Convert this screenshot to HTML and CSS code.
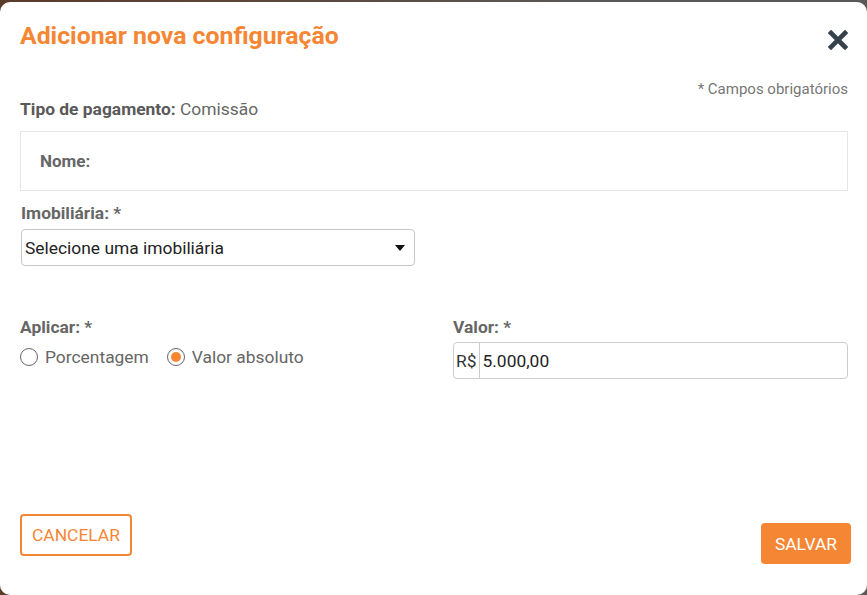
FILE: index.html
```html
<!DOCTYPE html>
<html lang="pt-BR">
<head>
<meta charset="utf-8">
<title>Adicionar nova configuração</title>
<link rel="stylesheet" href="styles.css">
</head>
<body>
<div class="backdrop">
  <div class="modal">
    <div class="modal-header">
      <h2 class="title">Adicionar nova configuração</h2>
      <button class="close" aria-label="Fechar">
        <svg width="20" height="20" viewBox="0 0 20 20"><path d="M3 3 L17 17 M17 3 L3 17" stroke="#37414b" stroke-width="4.6" stroke-linecap="square"/></svg>
      </button>
    </div>
    <div class="required-note">* Campos obrigatórios</div>
    <div class="tipo"><b>Tipo de pagamento:</b> Comissão</div>
    <div class="nome-box"><b>Nome:</b></div>
    <div class="field imob">
      <label class="label">Imobiliária: *</label>
      <div class="select">
        <span>Selecione uma imobiliária</span>
        <svg width="10" height="6" viewBox="0 0 10 6"><path d="M0 0 H10 L5 6 Z" fill="#111"/></svg>
      </div>
    </div>
    <div class="row">
      <div class="col">
        <label class="label">Aplicar: *</label>
        <div class="radios">
          <span class="radio"><span class="circle"></span>Porcentagem</span>
          <span class="radio"><span class="circle checked"></span>Valor absoluto</span>
        </div>
      </div>
      <div class="col">
        <label class="label">Valor: *</label>
        <div class="input-group">
          <span class="addon">R$</span>
          <span class="input">5.000,00</span>
        </div>
      </div>
    </div>
    <div class="footer">
      <button class="btn btn-outline">CANCELAR</button>
      <button class="btn btn-primary">SALVAR</button>
    </div>
  </div>
</div>
</body>
</html>
```
FILE: styles.css
```css
html, body {
  margin: 0;
  padding: 0;
}
body {
  font-family: Roboto, "Liberation Sans", sans-serif;
  background: #5b5b5b;
}
.backdrop {
  width: 867px;
  height: 595px;
  background: linear-gradient(90deg, #5a3b2a 0%, #5b4a40 40%, #5a5a5a 70%, #5a5a5a 100%);
  padding-top: 2px;
  box-sizing: border-box;
}
.modal {
  background: #fff;
  height: 593px;
  border-radius: 10px;
  box-sizing: border-box;
  padding: 0 19px 0 20px;
  display: flex;
  flex-direction: column;
}
.modal-header {
  display: flex;
  justify-content: space-between;
  align-items: center;
  height: 72px;
  padding-bottom: 4px;
  box-sizing: border-box;
}
.title {
  margin: 0;
  font-size: 24.8px;
  line-height: 30px;
  font-weight: 700;
  color: #f58634;
}
.close {
  border: 0;
  background: none;
  padding: 0;
  margin-top: 8px;
  width: 20px;
  height: 20px;
  display: flex;
}
.required-note {
  text-align: right;
  font-size: 15px;
  color: #777;
  height: 18px;
  line-height: 18px;
  margin-top: 6px;
}
.tipo {
  font-size: 17.4px;
  color: #666;
  line-height: 20px;
  margin-top: 1px;
}
.tipo b {
  color: #595959;
}
.nome-box {
  margin-top: 12px;
  height: 60px;
  border: 1px solid #e6e6e6;
  box-sizing: border-box;
  padding-left: 19px;
  display: flex;
  align-items: center;
  font-size: 17px;
  color: #666;
}
.field.imob {
  margin-top: 11px;
  padding-left: 1px;
}
.label {
  display: block;
  font-size: 17.4px;
  font-weight: 700;
  color: #666;
  line-height: 22px;
}
.select {
  margin-top: 5px;
  width: 394px;
  height: 37px;
  box-sizing: border-box;
  border: 1px solid #c8c8c8;
  border-radius: 4px;
  display: flex;
  align-items: center;
  justify-content: space-between;
  padding: 0 9px 0 3px;
  font-size: 17.4px;
  color: #222;
}
.row {
  display: flex;
  margin-top: 50px;
}
.col {
  flex: 1;
}
.col + .col {
  flex: 0 0 395px;
}
.radios {
  display: flex;
  gap: 18px;
  margin-top: 8px;
  font-size: 17.4px;
  color: #666;
  line-height: 22px;
}
.radio {
  display: flex;
  align-items: center;
  gap: 7px;
}
.circle {
  width: 16px;
  height: 16px;
  border: 1.5px solid #666;
  border-radius: 50%;
  display: inline-flex;
  align-items: center;
  justify-content: center;
}
.circle.checked::after {
  content: "";
  width: 10px;
  height: 10px;
  border-radius: 50%;
  background: #f58634;
}
.input-group {
  margin-top: 4px;
  height: 37px;
  border: 1px solid #ccc;
  border-radius: 4px;
  box-sizing: border-box;
  display: flex;
  align-items: center;
  font-size: 17.4px;
  color: #222;
}
.addon {
  height: 100%;
  display: flex;
  align-items: center;
  padding: 0 2px 0 2px;
  border-right: 1px solid #ccc;
  color: #333;
}
.input {
  padding-left: 3px;
}
.footer {
  margin-top: auto;
  display: flex;
  justify-content: space-between;
  align-items: flex-start;
  padding-bottom: 31px;
  margin-right: -3px;
}
.btn {
  font-family: Roboto, "Liberation Sans", sans-serif;
  font-size: 17.4px;
  border-radius: 4px;
  cursor: pointer;
}
.btn-outline {
  background: #fff;
  border: 2px solid #f58634;
  color: #f58634;
  height: 42px;
  padding: 0 10px;
}
.btn-primary {
  background: #f58634;
  border: 0;
  color: #fff;
  height: 41px;
  padding: 0 14px;
  margin-top: 9px;
}
```
